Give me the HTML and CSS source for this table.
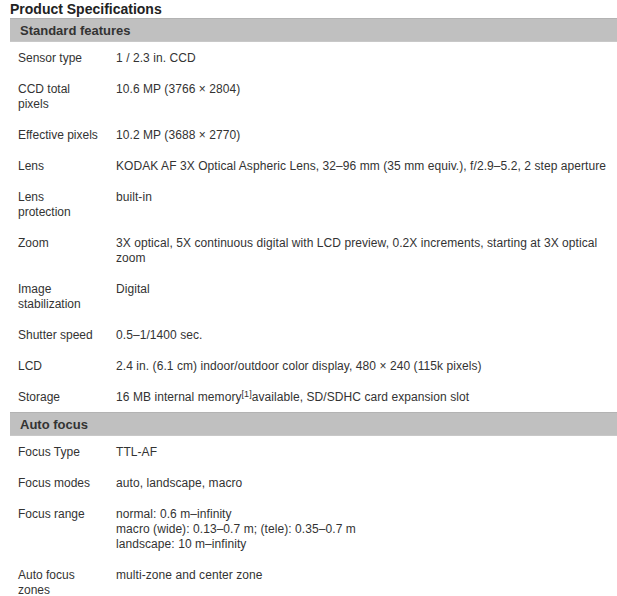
FILE: index.html
```html
<!DOCTYPE html>
<html>
<head>
<meta charset="utf-8">
<link rel="stylesheet" href="styles.css">
</head>
<body>
<div class="specs">
  <h1 class="title">Product Specifications</h1>
  <div class="section">
    <h2 class="section-head">Standard features</h2>
    <div class="row"><div class="label">Sensor type</div><div class="value">1 / 2.3 in. CCD</div></div>
    <div class="row"><div class="label">CCD total pixels</div><div class="value">10.6 MP (3766 × 2804)</div></div>
    <div class="row"><div class="label">Effective pixels</div><div class="value">10.2 MP (3688 × 2770)</div></div>
    <div class="row"><div class="label">Lens</div><div class="value">KODAK AF 3X Optical Aspheric Lens, 32–96 mm (35 mm equiv.), f/2.9–5.2, 2 step aperture</div></div>
    <div class="row"><div class="label">Lens protection</div><div class="value">built-in</div></div>
    <div class="row"><div class="label">Zoom</div><div class="value">3X optical, 5X continuous digital with LCD preview, 0.2X increments, starting at 3X optical zoom</div></div>
    <div class="row"><div class="label">Image stabilization</div><div class="value">Digital</div></div>
    <div class="row"><div class="label">Shutter speed</div><div class="value">0.5–1/1400 sec.</div></div>
    <div class="row"><div class="label">LCD</div><div class="value">2.4 in. (6.1 cm) indoor/outdoor color display, 480 × 240 (115k pixels)</div></div>
    <div class="row"><div class="label">Storage</div><div class="value">16 MB internal memory<sup class="ref">[1]</sup>available, SD/SDHC card expansion slot</div></div>
  </div>
  <div class="section">
    <h2 class="section-head">Auto focus</h2>
    <div class="row"><div class="label">Focus Type</div><div class="value">TTL-AF</div></div>
    <div class="row"><div class="label">Focus modes</div><div class="value">auto, landscape, macro</div></div>
    <div class="row"><div class="label">Focus range</div><div class="value">normal: 0.6 m–infinity<br>macro (wide): 0.13–0.7 m; (tele): 0.35–0.7 m<br>landscape: 10 m–infinity</div></div>
    <div class="row"><div class="label">Auto focus zones</div><div class="value">multi-zone and center zone</div></div>
  </div>
</div>
</body>
</html>
```

FILE: styles.css
```css
html, body {
  margin: 0;
  padding: 0;
  background: #ffffff;
}
body {
  font-family: "Liberation Sans", Arial, sans-serif;
  color: #333333;
  font-size: 12px;
  line-height: 15px;
}
.specs {
  padding-left: 10px;
}
.title {
  margin: 0;
  font-size: 14px;
  line-height: 19px;
  font-weight: bold;
  color: #222222;
  height: 18px;
}
.section {
  display: flex;
  flex-direction: column;
}
.section-head {
  margin: 0;
  height: 24px;
  box-sizing: border-box;
  padding-left: 10px;
  padding-top: 1px;
  background: #c0c0c0;
  border-top: 1px solid #b3b3b3;
  border-bottom: 1px solid #c8c8c8;
  font-size: 13px;
  line-height: 21px;
  font-weight: bold;
  color: #333333;
}
.row {
  display: flex;
  padding: 9px 0 7px;
}
.label {
  width: 81px;
  flex: none;
  padding-left: 8px;
  padding-right: 17px;
}
.value {
  flex: 1;
  padding-right: 4px;
  letter-spacing: 0.07px;
}
.ref {
  font-size: 9px;
  line-height: 0;
  vertical-align: 4px;
}
```
